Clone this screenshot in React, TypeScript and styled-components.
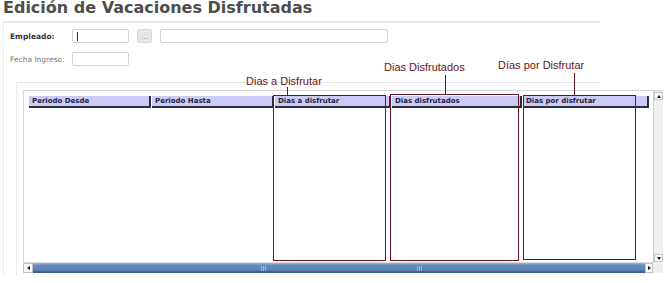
import React from 'react';
import styled, { createGlobalStyle } from 'styled-components';

const Global = createGlobalStyle`
  html, body { margin: 0; padding: 0; background: #fff; }
  body {
    font-family: "DejaVu Sans", Verdana, sans-serif;
    width: 669px;
    height: 283px;
    overflow: hidden;
  }
`;

const Page = styled.div`
  position: relative;
  width: 669px;
  height: 283px;
`;

const Title = styled.h1`
  margin: 0;
  padding: 0 0 0 3px;
  height: 21px;
  font: bold 16px/16px "DejaVu Sans", Verdana, sans-serif;
  color: #4d4d4d;
  white-space: nowrap;
`;

const Panel = styled.div`
  margin-left: 3px;
  width: 597px;
  height: 255px;
  box-sizing: border-box;
  border-top: 2px solid #e8e8e8;
  border-left: 1px solid #ececec;
  padding: 6px 0 0 6px;
`;

const FieldRow = styled.div<{ $gapTop?: number }>`
  display: flex;
  align-items: center;
  height: 14px;
  gap: 8px;
  margin-top: ${(p) => p.$gapTop ?? 0}px;
`;

const Label = styled.div<{ $bold?: boolean }>`
  width: 54px;
  font-size: 7.5px;
  font-weight: ${(p) => (p.$bold ? 'bold' : 'normal')};
  color: ${(p) => (p.$bold ? '#333' : '#777')};
  white-space: nowrap;
`;

const TextBox = styled.div<{ $w: number }>`
  width: ${(p) => p.$w}px;
  height: 14px;
  box-sizing: border-box;
  border: 1px solid #d4d4d4;
  border-radius: 2px;
  background: #fff;
  display: flex;
  align-items: center;
  padding-left: 4px;
`;

const Caret = styled.span`
  display: block;
  width: 1px;
  height: 9px;
  background: #333;
`;

const DotsButton = styled.div`
  width: 15px;
  height: 14px;
  box-sizing: border-box;
  border: 1px solid #d8d8d8;
  border-radius: 2px;
  background: #e6e6e6;
  color: #888;
  font-size: 7px;
  line-height: 14px;
  text-align: center;
`;

const InnerPanel = styled.div`
  margin-top: 16px;
  margin-left: 6px;
  width: 584px;
  height: 194px;
  box-sizing: border-box;
  border-top: 1px solid #e6e6e6;
  border-left: 1px solid #ececec;
  padding: 7px 0 0 6px;
`;

const Grid = styled.div`
  width: 640px;
  height: 183px;
  display: grid;
  grid-template-columns: 630px 10px;
  grid-template-rows: 173px 10px;
`;

const GridBody = styled.div`
  box-sizing: border-box;
  border-top: 1px solid #d6d6d6;
  border-left: 1px solid #d6d6d6;
  border-bottom: 1px solid #dadada;
  padding: 5px 0 0 5px;
  background: #fff;
  overflow: hidden;
`;

const HeaderRow = styled.div`
  display: flex;
  gap: 1px;
`;

const HeaderCell = styled.div<{ $w: number }>`
  width: ${(p) => p.$w}px;
  height: 12px;
  box-sizing: border-box;
  background: #cbcbf6;
  border-bottom: 2px solid #2c2c44;
  border-right: 2px solid #2c2c44;
  padding-left: 3px;
  font-size: 7px;
  font-weight: bold;
  line-height: 10px;
  color: #1e1e3c;
  white-space: nowrap;
  overflow: hidden;
`;

const VScroll = styled.div`
  box-sizing: border-box;
  background: #f1f1f1;
  border-left: 1px solid #cfcfcf;
  border-top: 1px solid #d6d6d6;
  display: flex;
  flex-direction: column;
  justify-content: space-between;
  align-items: center;
  padding: 1px 0 1px;
`;

const HScroll = styled.div`
  display: flex;
  height: 10px;
`;

const ArrowButton = styled.div<{ $w: number; $h: number }>`
  width: ${(p) => p.$w}px;
  height: ${(p) => p.$h}px;
  box-sizing: border-box;
  border: 1px solid #c4c4c4;
  background: #fafafa;
  display: flex;
  align-items: center;
  justify-content: center;
  flex: none;
`;

const Tri = styled.span<{ $dir: 'up' | 'down' | 'left' | 'right' }>`
  width: 0;
  height: 0;
  ${(p) =>
    p.$dir === 'up'
      ? 'border-left: 2px solid transparent; border-right: 2px solid transparent; border-bottom: 3px solid #111;'
      : p.$dir === 'down'
      ? 'border-left: 2px solid transparent; border-right: 2px solid transparent; border-top: 3px solid #111;'
      : p.$dir === 'left'
      ? 'border-top: 2px solid transparent; border-bottom: 2px solid transparent; border-right: 3px solid #111;'
      : 'border-top: 2px solid transparent; border-bottom: 2px solid transparent; border-left: 3px solid #111;'}
`;

const Track = styled.div`
  flex: 1;
  display: flex;
  align-items: center;
  gap: 150px;
  padding-left: 228px;
  background: linear-gradient(#8eaed3 0, #8eaed3 1px, #6289ba 2px, #5c84b5 7px, #43699a 8px, #3a5f8f 10px);
`;

const Grip = styled.span`
  width: 6px;
  height: 5px;
  background: repeating-linear-gradient(90deg, #9cb8da 0 1px, transparent 1px 2px);
`;

const Corner = styled.div`
  background: #efefef;
`;

const NoteBox = styled.div<{ $x: number; $y: number; $w: number; $h: number }>`
  position: absolute;
  left: ${(p) => p.$x}px;
  top: ${(p) => p.$y}px;
  width: ${(p) => p.$w}px;
  height: ${(p) => p.$h}px;
  box-sizing: border-box;
  border: 1px solid #6d1322;
  pointer-events: none;
`;

const NoteLabel = styled.div<{ $x: number; $y: number }>`
  position: absolute;
  left: ${(p) => p.$x}px;
  top: ${(p) => p.$y}px;
  font: 11px/13px "Liberation Sans", Arial, sans-serif;
  color: #6d1322;
  white-space: nowrap;
`;

const NoteLine = styled.div<{ $x: number; $y: number; $h: number }>`
  position: absolute;
  left: ${(p) => p.$x}px;
  top: ${(p) => p.$y}px;
  width: 1px;
  height: ${(p) => p.$h}px;
  background: #6d1322;
`;

const columns = [
  { title: 'Periodo Desde', w: 122 },
  { title: 'Periodo Hasta', w: 122 },
  { title: 'Dias a disfrutar', w: 116 },
  { title: 'Dias disfrutados', w: 130 },
  { title: 'Dias por disfrutar', w: 126 },
];

const notes = [
  { text: 'Dias a Disfrutar', lx: 246, ly: 75, line: { x: 287, y: 87, h: 8 }, box: { x: 273, y: 95, w: 113, h: 166 } },
  { text: 'Dias Disfrutados', lx: 384, ly: 61, line: { x: 445, y: 75, h: 19 }, box: { x: 390, y: 94, w: 129, h: 167 } },
  { text: 'Días por Disfrutar', lx: 498, ly: 59, line: { x: 574, y: 73, h: 22 }, box: { x: 523, y: 95, w: 113, h: 165 } },
];

export default function App() {
  return (
    <Page>
      <Global />
      <Title>Edición de Vacaciones Disfrutadas</Title>
      <Panel>
        <FieldRow>
          <Label $bold>Empleado:</Label>
          <TextBox $w={57}>
            <Caret />
          </TextBox>
          <DotsButton>...</DotsButton>
          <TextBox $w={228} />
        </FieldRow>
        <FieldRow $gapTop={9}>
          <Label>Fecha Ingreso:</Label>
          <TextBox $w={57} />
        </FieldRow>
        <InnerPanel>
          <Grid>
            <GridBody>
              <HeaderRow>
                {columns.map((c) => (
                  <HeaderCell key={c.title} $w={c.w}>
                    {c.title}
                  </HeaderCell>
                ))}
              </HeaderRow>
            </GridBody>
            <VScroll>
              <ArrowButton $w={9} $h={8}>
                <Tri $dir="up" />
              </ArrowButton>
              <ArrowButton $w={9} $h={8}>
                <Tri $dir="down" />
              </ArrowButton>
            </VScroll>
            <HScroll>
              <ArrowButton $w={10} $h={10}>
                <Tri $dir="left" />
              </ArrowButton>
              <Track>
                <Grip />
                <Grip />
              </Track>
              <ArrowButton $w={8} $h={10}>
                <Tri $dir="right" />
              </ArrowButton>
            </HScroll>
            <Corner />
          </Grid>
        </InnerPanel>
      </Panel>
      {notes.map((n) => (
        <React.Fragment key={n.text}>
          <NoteLabel $x={n.lx} $y={n.ly}>{n.text}</NoteLabel>
          <NoteLine $x={n.line.x} $y={n.line.y} $h={n.line.h} />
          <NoteBox $x={n.box.x} $y={n.box.y} $w={n.box.w} $h={n.box.h} />
        </React.Fragment>
      ))}
    </Page>
  );
}
